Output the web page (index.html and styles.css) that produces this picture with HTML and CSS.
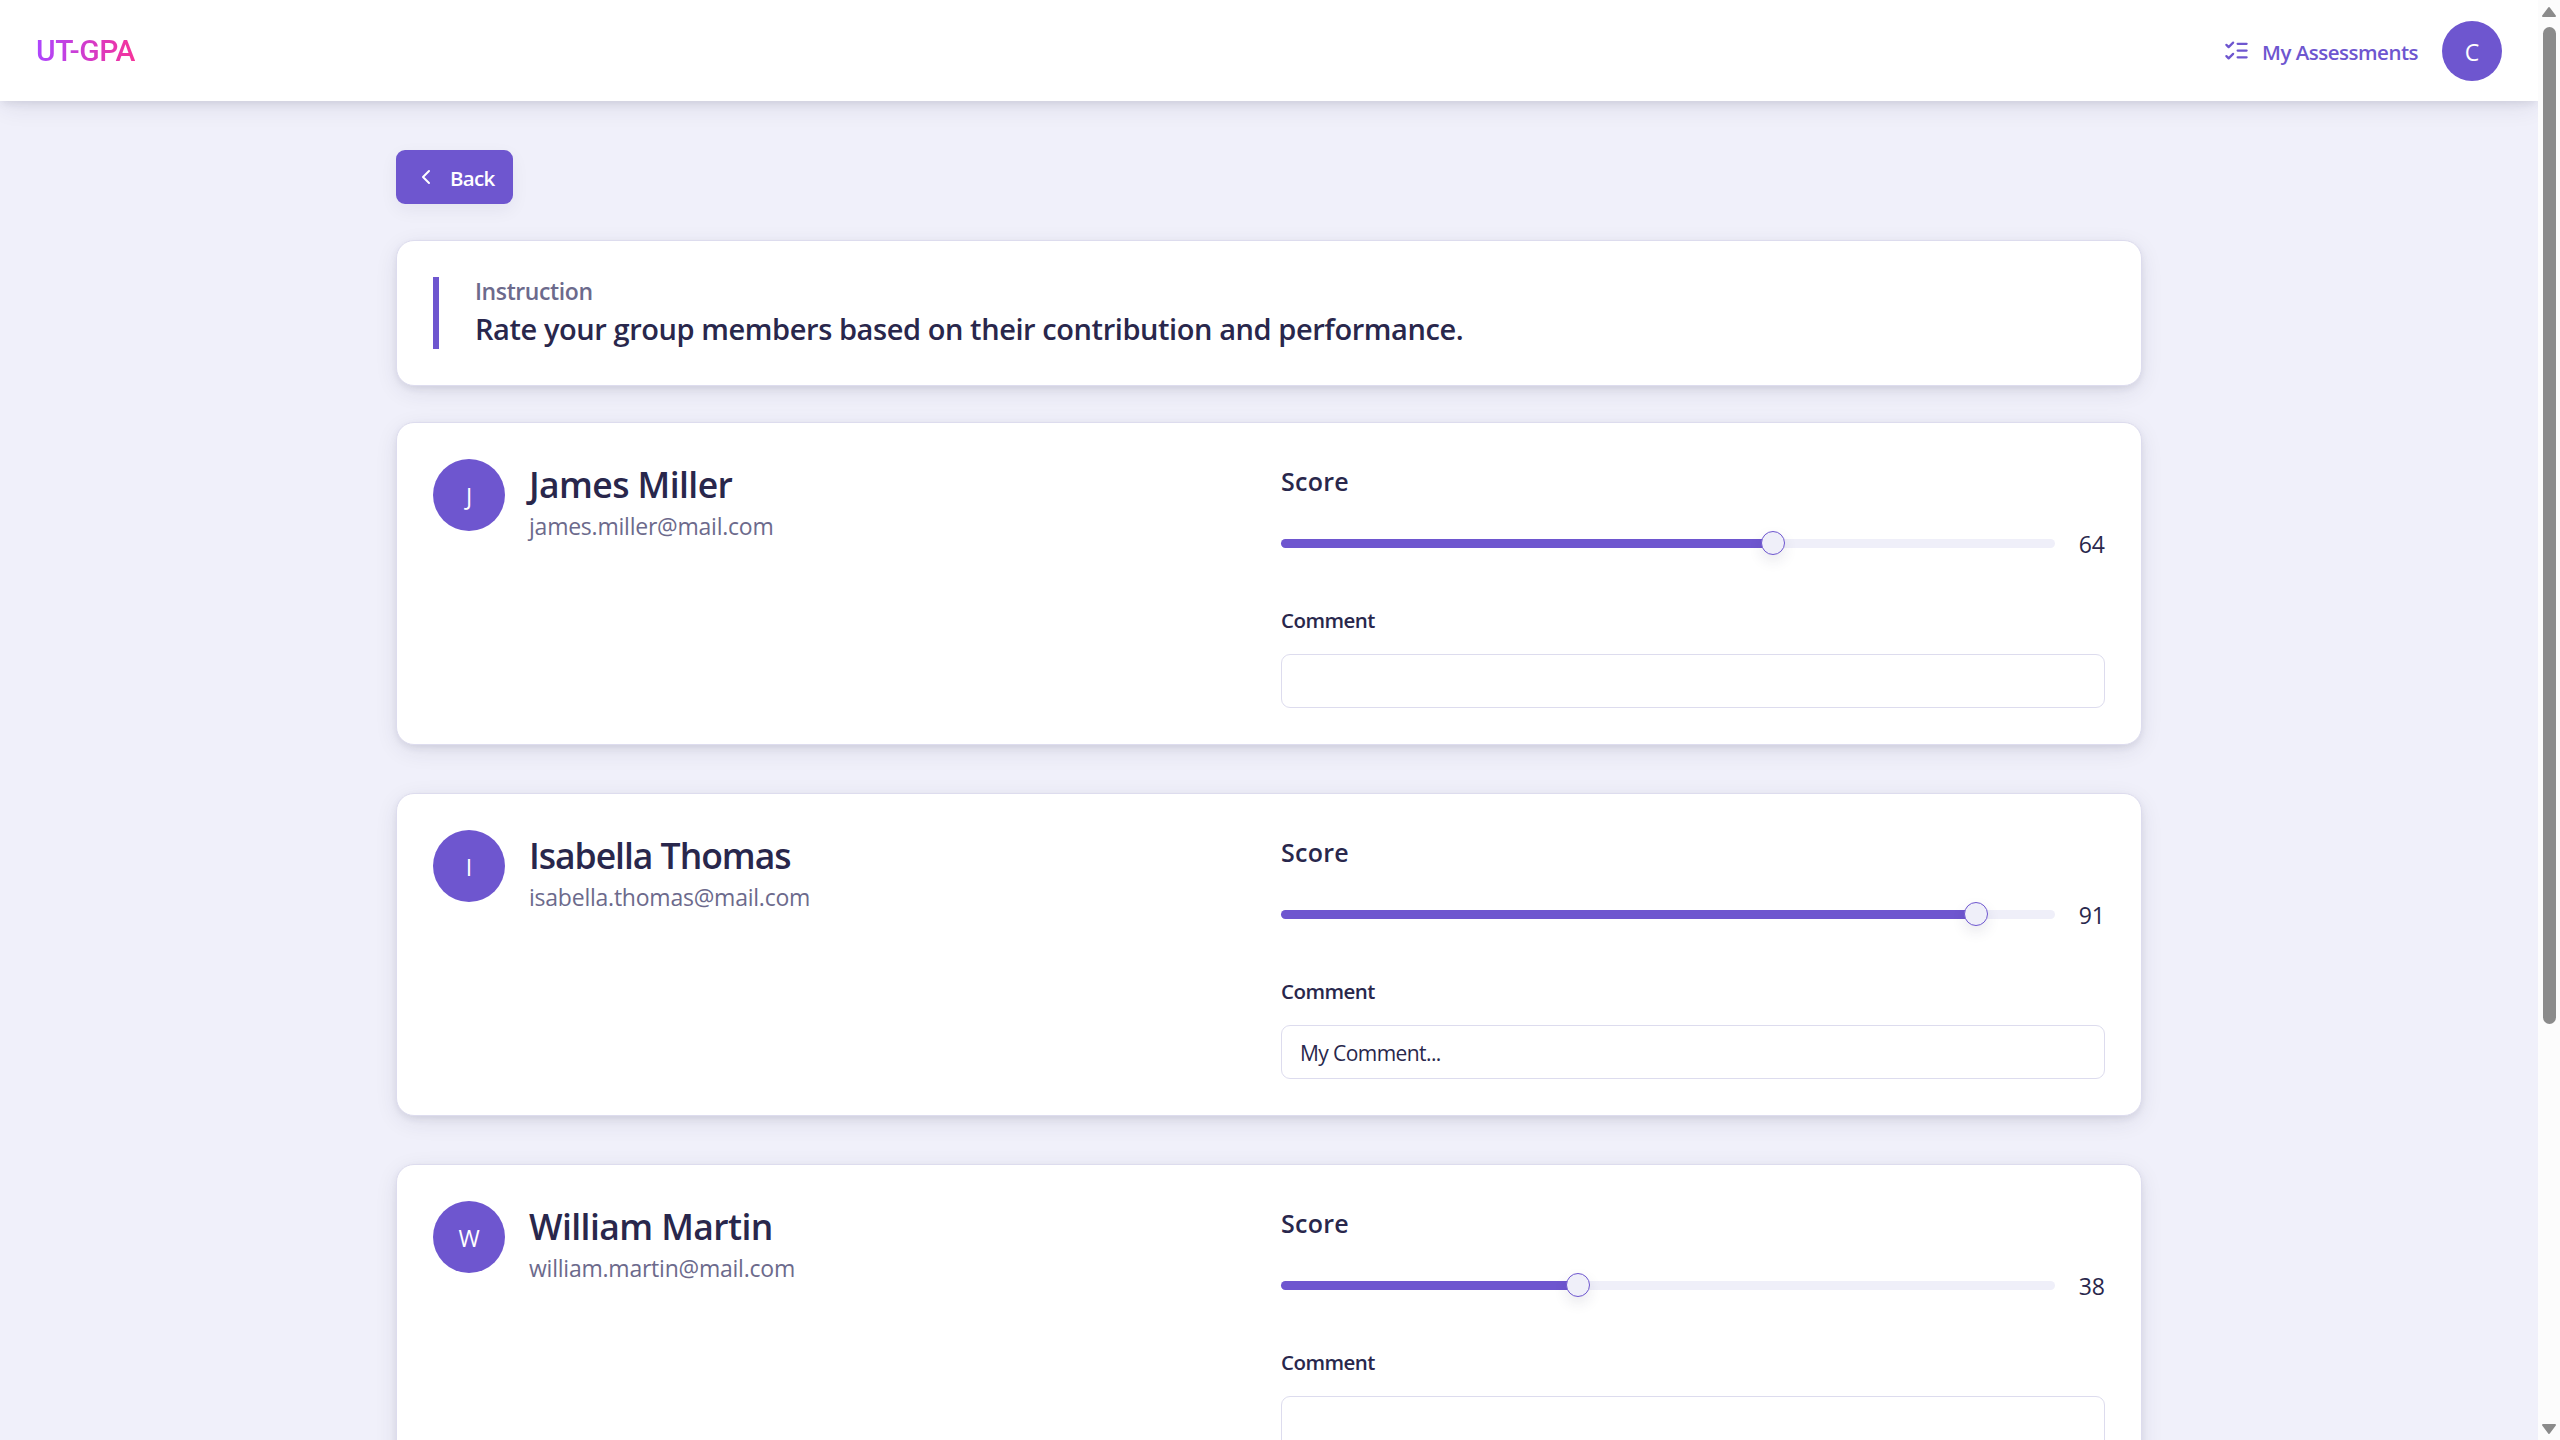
FILE: index.html
```html
<!DOCTYPE html>
<html lang="en">
<head>
<meta charset="utf-8">
<title>UT-GPA</title>
<link rel="stylesheet" href="styles.css">
</head>
<body>
<div class="page">
  <header class="topbar">
    <a class="logo">UT-GPA</a>
    <nav class="nav">
      <a class="nav-link">
        <svg class="nav-icon" viewBox="0 0 24 24"><path d="m3 17 2 2 4-4M3 7l2 2 4-4M13 6h8M13 12h8M13 18h8"/></svg>
        <span class="nav-text">My Assessments</span>
      </a>
      <span class="avatar avatar-small">C</span>
    </nav>
  </header>
  <main class="content">
    <button class="back"><svg class="back-icon" viewBox="0 0 24 24"><path d="m15 18-6-6 6-6"/></svg><span class="back-text">Back</span></button>
    <section class="card instruction">
      <div class="instruction-body">
        <p class="instruction-label">Instruction</p>
        <p class="instruction-text">Rate your group members based on their contribution and performance.</p>
      </div>
    </section>
    <div class="members">
      <section class="card member">
        <div class="person">
          <span class="avatar">J</span>
          <div class="person-info"><h2 class="name">James Miller</h2><p class="email">james.miller@mail.com</p></div>
        </div>
        <div class="rating">
          <h3 class="score-label">Score</h3>
          <div class="score-row"><div class="slider"><div class="fill" style="width:64%"></div><div class="rail"><span class="thumb" style="left:64%"></span></div></div><span class="score">64</span></div>
          <label class="comment-label">Comment</label>
          <div class="comment"></div>
        </div>
      </section>
      <section class="card member">
        <div class="person">
          <span class="avatar">I</span>
          <div class="person-info"><h2 class="name name-tight">Isabella Thomas</h2><p class="email">isabella.thomas@mail.com</p></div>
        </div>
        <div class="rating">
          <h3 class="score-label">Score</h3>
          <div class="score-row"><div class="slider"><div class="fill" style="width:91%"></div><div class="rail"><span class="thumb" style="left:91%"></span></div></div><span class="score">91</span></div>
          <label class="comment-label">Comment</label>
          <div class="comment">My Comment...</div>
        </div>
      </section>
      <section class="card member">
        <div class="person">
          <span class="avatar">W</span>
          <div class="person-info"><h2 class="name">William Martin</h2><p class="email">william.martin@mail.com</p></div>
        </div>
        <div class="rating">
          <h3 class="score-label">Score</h3>
          <div class="score-row"><div class="slider"><div class="fill" style="width:38%"></div><div class="rail"><span class="thumb" style="left:38%"></span></div></div><span class="score">38</span></div>
          <label class="comment-label">Comment</label>
          <div class="comment"></div>
        </div>
      </section>
    </div>
  </main>
</div>
<aside class="scrollbar">
  <svg class="arrow" viewBox="0 0 16 12"><path d="M8 2 14 10H2Z"/></svg>
  <div class="scroll-thumb"></div>
  <svg class="arrow arrow-down" viewBox="0 0 16 12"><path d="M8 10 2 2H14Z"/></svg>
</aside>
</body>
</html>
```
FILE: styles.css
```css
* { box-sizing: border-box; margin: 0; }
body {
  display: flex;
  height: 1440px;
  overflow: hidden;
  background: #f0f0fa;
  color: #29274c;
  font-family: "Open Sans", sans-serif;
}
.page { flex: 1; height: 1440px; overflow: hidden; }

.topbar {
  position: relative;
  display: flex;
  align-items: center;
  justify-content: space-between;
  height: 101px;
  padding: 0 36px;
  background: #fff;
  box-shadow: 0 6px 24px -3px rgba(41, 39, 76, .12), 0 3px 9px -2px rgba(41, 39, 76, .12);
}
.logo {
  font: 500 30px/42px Roboto, sans-serif;
  letter-spacing: -.45px;
  color: transparent;
  background: linear-gradient(90deg, #ad46ff, #f6339a);
  background-clip: text;
  -webkit-background-clip: text;
}
.nav { display: flex; align-items: center; gap: 24px; }
.nav-link {
  display: flex;
  align-items: center;
  gap: 12px;
  font-size: 20.5px;
  font-weight: 600;
  letter-spacing: -.5px;
  color: #6e56cf;
}
.nav-text { padding-top: 3px; }
.nav-icon { width: 27px; height: 27px; }
.nav-icon, .back-icon {
  fill: none;
  stroke: currentColor;
  stroke-width: 2;
  stroke-linecap: round;
  stroke-linejoin: round;
}
.avatar {
  display: grid;
  place-items: center;
  width: 72px;
  height: 72px;
  padding-top: 2px;
  border-radius: 50%;
  background: #6e56cf;
  color: #fff;
  font-size: 23px;
}
.avatar-small { width: 60px; height: 60px; }

.content {
  display: flex;
  flex-direction: column;
  gap: 36px;
  width: 1746px;
  margin: 49px auto 0;
}
.back {
  display: flex;
  align-items: center;
  align-self: flex-start;
  gap: 12px;
  width: 117px;
  height: 54px;
  padding: 0 0 0 18px;
  border: 0;
  border-radius: 9px;
  background: #6e56cf;
  color: #fff;
  font: 600 20.5px "Open Sans", sans-serif;
  letter-spacing: -.7px;
  box-shadow: 0 6px 18px rgba(41, 39, 76, .06);
}
.back-text { padding-top: 1px; }
.back-icon { width: 24px; height: 24px; margin-top: -1px; }

.card {
  padding: 36px;
  border: 1px solid #dddcee;
  border-radius: 18px;
  background: #fff;
  box-shadow: 0 6px 24px -3px rgba(41, 39, 76, .12), 0 3px 9px -2px rgba(41, 39, 76, .12);
}
.instruction-body { height: 72px; padding-left: 36px; border-left: 6px solid #6e56cf; }
.instruction-label { font-size: 23px; font-weight: 600; line-height: 28px; letter-spacing: -.4px; color: #6c6a8c; }
.instruction-text { font-size: 29px; font-weight: 600; line-height: 48px; letter-spacing: -.42px; white-space: nowrap; }

.members { display: flex; flex-direction: column; gap: 48px; }
.member { display: grid; grid-template-columns: 1fr 1fr; gap: 24px; height: 323px; }
.person { display: flex; gap: 24px; }
.name { font-size: 35.5px; font-weight: 600; line-height: 51px; letter-spacing: -.58px; }
.name-tight { letter-spacing: -1.03px; }
.email { font-size: 23px; line-height: 33px; letter-spacing: -.23px; color: #6c6a8c; }
.score-label { font-size: 25px; font-weight: 600; line-height: 44px; letter-spacing: .25px; }
.score-row { display: flex; align-items: center; justify-content: space-between; height: 36px; margin-top: 22px; }
.slider { position: relative; width: 774px; height: 9px; border-radius: 5px; background: #efeff9; }
.fill { height: 9px; border-radius: 5px; background: #6e56cf; }
.rail { position: absolute; inset: 0 12px; }
.thumb {
  position: absolute;
  top: -8px;
  width: 24px;
  height: 24px;
  margin-left: -12px;
  border: 1px solid #6e56cf;
  border-radius: 50%;
  background: #efeff9;
  box-shadow: 0 6px 14px rgba(41, 39, 76, .1);
}
.score { padding-top: 2px; font-size: 23px; }
.comment-label { display: block; margin-top: 41px; font-size: 20.5px; font-weight: 600; line-height: 36px; letter-spacing: -.55px; }
.comment {
  height: 54px;
  margin-top: 16px;
  padding: 0 18px;
  border: 1px solid #dddcee;
  border-radius: 9px;
  font-size: 21px;
  line-height: 55px;
  letter-spacing: -.58px;
}

.scrollbar {
  display: flex;
  flex-direction: column;
  align-items: center;
  width: 22px;
  height: 1440px;
  padding: 6px 0 5px;
  background: #fcfcfc;
}
.arrow { width: 16px; height: 12px; fill: #8b8b8b; stroke: #8b8b8b; stroke-width: 2; stroke-linejoin: round; }
.arrow-down { margin-top: auto; }
.scroll-thumb { width: 13px; height: 997px; margin: 9px 0 0 1px; border-radius: 7px; background: #8b8b8b; }
```
